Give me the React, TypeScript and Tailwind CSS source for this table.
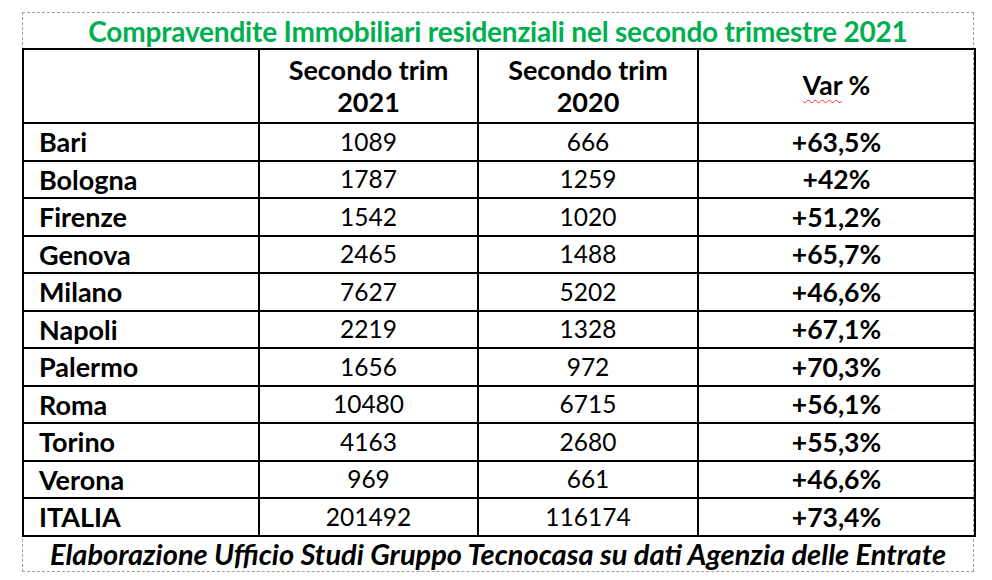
import React from "react";

const rows: [string, string, string, string][] = [
  ["Bari", "1089", "666", "+63,5%"],
  ["Bologna", "1787", "1259", "+42%"],
  ["Firenze", "1542", "1020", "+51,2%"],
  ["Genova", "2465", "1488", "+65,7%"],
  ["Milano", "7627", "5202", "+46,6%"],
  ["Napoli", "2219", "1328", "+67,1%"],
  ["Palermo", "1656", "972", "+70,3%"],
  ["Roma", "10480", "6715", "+56,1%"],
  ["Torino", "4163", "2680", "+55,3%"],
  ["Verona", "969", "661", "+46,6%"],
  ["ITALIA", "201492", "116174", "+73,4%"],
];

export default function App() {
  return (
    <div className="w-[992px] h-[580px] bg-white pt-[12px] pl-[22px]" style={{ fontFamily: "Lato, 'Open Sans', sans-serif" }}>
      <div className="w-[952px] h-[560px] border border-dashed border-[#a0a0a0] flex flex-col">
        <div className="h-[35px] flex items-center justify-center text-[28px] font-bold text-[#00b050] leading-none tracking-[-0.2px]">
          Compravendite Immobiliari residenziali nel secondo trimestre 2021
        </div>
        <table className="border-collapse w-[952px] table-fixed text-black -ml-px">
          <colgroup>
            <col className="w-[236px]" />
            <col className="w-[219px]" />
            <col className="w-[220px]" />
            <col className="w-[277px]" />
          </colgroup>
          <thead>
            <tr className="h-[74px] text-[27px]">
              <th className="border-2 border-black"></th>
              <th className="border-2 border-black font-bold leading-[32px] text-center">Secondo trim<br />2021</th>
              <th className="border-2 border-black font-bold leading-[32px] text-center">Secondo trim<br />2020</th>
              <th className="border-2 border-black font-bold text-center text-[26.5px]">
                <span className="underline decoration-wavy decoration-red-500 decoration-1 underline-offset-4">Var</span> %
              </th>
            </tr>
          </thead>
          <tbody>
            {rows.map((r) => (
              <tr key={r[0]} className="h-[37.5px]">
                <td className="border-2 border-black font-bold pl-[15px] leading-none text-[27px]">{r[0]}</td>
                <td className="border-2 border-black text-center leading-none text-[24.5px]">{r[1]}</td>
                <td className="border-2 border-black text-center leading-none text-[24.5px]">{r[2]}</td>
                <td className="border-2 border-black text-center font-bold leading-none text-[26.5px]">{r[3]}</td>
              </tr>
            ))}
          </tbody>
        </table>
        <div className="flex-1 flex items-center justify-center italic font-bold text-[29px] text-black leading-none">
          Elaborazione Ufficio Studi Gruppo Tecnocasa su dati Agenzia delle Entrate
        </div>
      </div>
    </div>
  );
}
